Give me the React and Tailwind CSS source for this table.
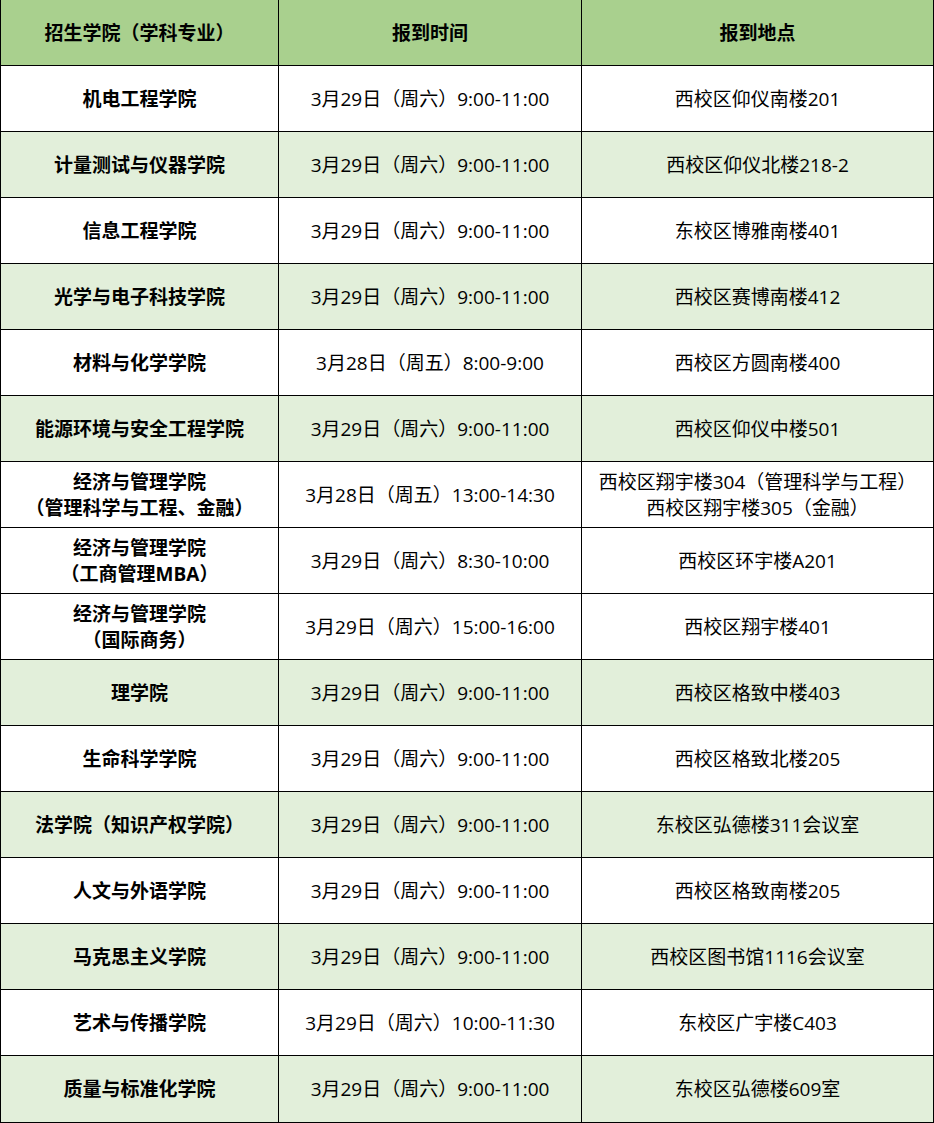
const rows = [
  { name: ['机电工程学院'], time: '3月29日（周六）9:00-11:00', place: ['西校区仰仪南楼201'], green: false },
  { name: ['计量测试与仪器学院'], time: '3月29日（周六）9:00-11:00', place: ['西校区仰仪北楼218-2'], green: true },
  { name: ['信息工程学院'], time: '3月29日（周六）9:00-11:00', place: ['东校区博雅南楼401'], green: false },
  { name: ['光学与电子科技学院'], time: '3月29日（周六）9:00-11:00', place: ['西校区赛博南楼412'], green: true },
  { name: ['材料与化学学院'], time: '3月28日（周五）8:00-9:00', place: ['西校区方圆南楼400'], green: false },
  { name: ['能源环境与安全工程学院'], time: '3月29日（周六）9:00-11:00', place: ['西校区仰仪中楼501'], green: true },
  { name: ['经济与管理学院', '（管理科学与工程、金融）'], time: '3月28日（周五）13:00-14:30', place: ['西校区翔宇楼304（管理科学与工程）', '西校区翔宇楼305（金融）'], green: false },
  { name: ['经济与管理学院', '（工商管理MBA）'], time: '3月29日（周六）8:30-10:00', place: ['西校区环宇楼A201'], green: false },
  { name: ['经济与管理学院', '（国际商务）'], time: '3月29日（周六）15:00-16:00', place: ['西校区翔宇楼401'], green: false },
  { name: ['理学院'], time: '3月29日（周六）9:00-11:00', place: ['西校区格致中楼403'], green: true },
  { name: ['生命科学学院'], time: '3月29日（周六）9:00-11:00', place: ['西校区格致北楼205'], green: false },
  { name: ['法学院（知识产权学院）'], time: '3月29日（周六）9:00-11:00', place: ['东校区弘德楼311会议室'], green: true },
  { name: ['人文与外语学院'], time: '3月29日（周六）9:00-11:00', place: ['西校区格致南楼205'], green: false },
  { name: ['马克思主义学院'], time: '3月29日（周六）9:00-11:00', place: ['西校区图书馆1116会议室'], green: true },
  { name: ['艺术与传播学院'], time: '3月29日（周六）10:00-11:30', place: ['东校区广宇楼C403'], green: false },
  { name: ['质量与标准化学院'], time: '3月29日（周六）9:00-11:00', place: ['东校区弘德楼609室'], green: true },
]

function Lines({ items }) {
  return items.map((t, i) => (
    <div key={i} className="whitespace-nowrap">
      {t}
    </div>
  ))
}

export default function App() {
  return (
    <div
      className="w-[934px] bg-white text-[19px] leading-[26px] text-black"
      style={{ fontFamily: '"Open Sans", "Noto Sans CJK SC", sans-serif' }}
    >
      <div className="grid grid-cols-[278px_303px_351px] border-r-2 border-b-2 border-l border-black">
        {/* Header */}
        <div className="flex h-[66px] items-center justify-center border-r border-b border-black bg-[#a9d08e] font-bold">
          招生学院（学科专业）
        </div>
        <div className="flex h-[66px] items-center justify-center border-r border-b border-black bg-[#a9d08e] font-bold">
          报到时间
        </div>
        <div className="flex h-[66px] items-center justify-center border-b border-black bg-[#a9d08e] font-bold">
          报到地点
        </div>

        {rows.map((r, i) => {
          const bg = r.green ? 'bg-[#e2efda]' : 'bg-white'
          const last = i === rows.length - 1
          return [
            <div
              key={`a${i}`}
              className={`flex h-[66px] flex-col items-center justify-center border-r border-black text-center font-bold ${bg} ${last ? '' : 'border-b'}`}
            >
              <Lines items={r.name} />
            </div>,
            <div
              key={`b${i}`}
              className={`flex h-[66px] items-center justify-center border-r border-black ${bg} ${last ? '' : 'border-b'}`}
            >
              <span className="whitespace-nowrap">{r.time}</span>
            </div>,
            <div
              key={`c${i}`}
              className={`flex h-[66px] flex-col items-center justify-center border-black text-center ${bg} ${last ? '' : 'border-b'}`}
            >
              <Lines items={r.place} />
            </div>,
          ]
        })}
      </div>
    </div>
  )
}
